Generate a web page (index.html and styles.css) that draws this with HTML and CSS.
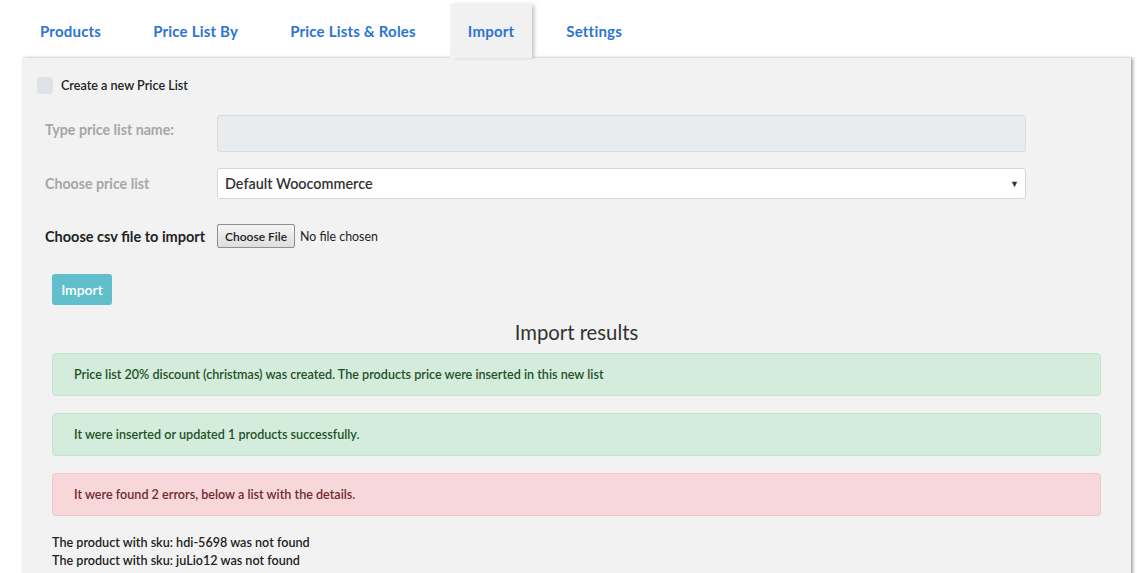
FILE: index.html
```html
<!DOCTYPE html>
<html>
<head>
<meta charset="utf-8">
<link rel="stylesheet" href="styles.css">
</head>
<body>
<nav class="tabs">
  <a class="tab">Products</a>
  <a class="tab">Price List By</a>
  <a class="tab">Price Lists &amp; Roles</a>
  <a class="tab active">Import</a>
  <a class="tab">Settings</a>
</nav>
<main class="panel">
  <label class="check-row"><span class="checkbox"></span><span>Create a new Price List</span></label>
  <div class="form-row row-name">
    <span class="label muted">Type price list name:</span>
    <div class="input disabled"></div>
  </div>
  <div class="form-row row-select">
    <span class="label muted">Choose price list</span>
    <div class="select"><span>Default Woocommerce</span><span class="caret">▼</span></div>
  </div>
  <div class="form-row row-file">
    <span class="label strong">Choose csv file to import</span>
    <span class="file-btn">Choose File</span><span class="file-text">No file chosen</span>
  </div>
  <div class="btn-row"><span class="btn-import">Import</span></div>
  <h2 class="results-title">Import results</h2>
  <div class="alert success">Price list 20% discount (christmas) was created. The products price were inserted in this new list</div>
  <div class="alert success">It were inserted or updated 1 products successfully.</div>
  <div class="alert danger">It were found 2 errors, below a list with the details.</div>
  <div class="errors">
    <div>The product with sku: hdi-5698 was not found</div>
    <div>The product with sku: juLio12 was not found</div>
  </div>
</main>
</body>
</html>
```
FILE: styles.css
```css
* { box-sizing: border-box; }
html, body { margin: 0; padding: 0; background: #fff; overflow: hidden; }
body { font-family: Lato, "Open Sans", sans-serif; color: #333; width: 1137px; height: 573px; }

.tabs { display: flex; padding: 4px 0 0 22px; height: 58px; gap: 16px; }
.tab {
  display: flex; align-items: center; padding: 0 18px; height: 54px;
  font-size: 15px; font-weight: 700; color: #2b74d6; letter-spacing: 0.2px;
}
.tab.active { background: #f1f1f1; box-shadow: 3px 0 4px -1px rgba(0,0,0,0.25); }

.panel {
  margin-left: 22px; width: 1109px; min-height: 520px; background: #f2f2f2;
  box-shadow: 2px 0 3px rgba(0,0,0,0.35);
  padding: 18px 30px 0 15px;
}

.check-row { display: flex; align-items: center; gap: 8px; font-size: 12.6px; font-weight: 600; color: #222; height: 18px; }
.checkbox { width: 16px; height: 17px; background: #dfe2e7; border-radius: 3px; }

.form-row { display: flex; align-items: center; padding-left: 8px; }
.label { width: 172px; font-size: 14.5px; font-weight: 700; }
.muted { color: #a6a6a6; font-size: 14.2px; }
.strong { color: #222; font-size: 14.5px; }
.row-name { margin-top: 21px; }
.row-name .label { margin-top: -8px; }
.input { width: 809px; height: 37px; border: 1px solid #dcdcdc; border-radius: 3px; }
.input.disabled { background: #e9ecef; }
.row-select { margin-top: 16px; }
.select {
  width: 809px; height: 31px; background: #fff; border: 1px solid #d6d6d6; border-radius: 3px;
  display: flex; align-items: center; justify-content: space-between; padding: 0 6px 0 7px;
  font-size: 14.4px; font-weight: 600; color: #333;
}
.caret { font-size: 9px; color: #333; }
.row-file { margin-top: 25px; }
.file-btn {
  height: 24px; padding: 0 7px; border: 1px solid #8f8f8f; border-radius: 2px;
  background: linear-gradient(#f4f4f4, #dedede); font-size: 12px; font-weight: 600; color: #222;
  display: flex; align-items: center;
}
.file-text { font-size: 12.4px; margin-left: 5px; color: #222; }

.btn-row { padding-left: 15px; margin-top: 26px; }
.btn-import {
  display: inline-flex; align-items: center; justify-content: center; width: 60px; height: 31px;
  background: #61bfcc; border-radius: 3px; color: #fff; font-size: 14px; font-weight: 600;
}

.results-title { margin: 14px 0 0 15px; height: 34px; text-align: center; font-size: 20.3px; font-weight: 400; color: #333; line-height: 26px; }

.alert {
  margin: 0 0 17px 15px; height: 43px; border-radius: 4px; border: 1px solid;
  display: flex; align-items: center; padding-left: 21px; font-size: 12.6px; font-weight: 600;
}
.success { background: #d4ecdb; border-color: #c5e4cd; color: #1e5128; }
.danger { background: #f8d7da; border-color: #f0c6cb; color: #6f2a30; }

.errors { margin: 18px 0 0 15px; font-size: 12.6px; font-weight: 600; color: #222; line-height: 18px; }
```
